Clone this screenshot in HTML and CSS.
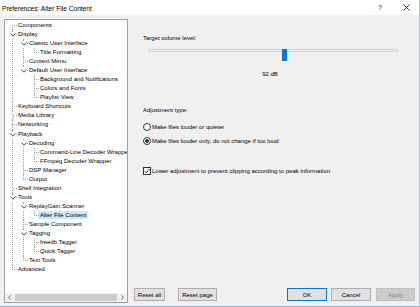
FILE: index.html
```html
<!DOCTYPE html>
<html lang="en">
<head>
  <meta charset="UTF-8">
  <title>Preferences: Alter File Content</title>
  <link rel="stylesheet" href="styles.css">
</head>
<body>
  <div class="window">
    <div class="titlebar">
      <span class="title">Preferences: Alter File Content</span>
      <span class="tb-btn help">?</span>
      <span class="tb-btn close">
        <svg width="7" height="7" viewBox="0 0 7 7"><path d="M0.5 0.5L6.5 6.5M6.5 0.5L0.5 6.5" stroke="#222" stroke-width="0.9"/></svg>
      </span>
    </div>

    <div class="main">
      <div class="tree-pane">
        <ul class="tree">
          <li><div class="row">Components</div></li>
          <li>
            <span class="twisty open"><svg width="6" height="4" viewBox="0 0 6 4"><polyline points="0.5,0.5 3,3.2 5.5,0.5" fill="none" stroke="#4a4a4a" stroke-width="1"/></svg></span>
            <div class="row">Display</div>
            <ul>
              <li>
                <span class="twisty open"><svg width="6" height="4" viewBox="0 0 6 4"><polyline points="0.5,0.5 3,3.2 5.5,0.5" fill="none" stroke="#4a4a4a" stroke-width="1"/></svg></span>
                <div class="row">Classic User Interface</div>
                <ul>
                  <li><div class="row">Title Formatting</div></li>
                </ul>
              </li>
              <li><div class="row">Context Menu</div></li>
              <li>
                <span class="twisty open"><svg width="6" height="4" viewBox="0 0 6 4"><polyline points="0.5,0.5 3,3.2 5.5,0.5" fill="none" stroke="#4a4a4a" stroke-width="1"/></svg></span>
                <div class="row">Default User Interface</div>
                <ul>
                  <li><div class="row">Background and Notifications</div></li>
                  <li><div class="row">Colors and Fonts</div></li>
                  <li><div class="row">Playlist View</div></li>
                </ul>
              </li>
            </ul>
          </li>
          <li><div class="row">Keyboard Shortcuts</div></li>
          <li>
            <span class="twisty shut"><svg width="4" height="6" viewBox="0 0 4 6"><polyline points="0.6,0.5 3.2,3 0.6,5.5" fill="none" stroke="#a6a6a6" stroke-width="1"/></svg></span>
            <div class="row">Media Library</div>
          </li>
          <li><div class="row">Networking</div></li>
          <li>
            <span class="twisty open"><svg width="6" height="4" viewBox="0 0 6 4"><polyline points="0.5,0.5 3,3.2 5.5,0.5" fill="none" stroke="#4a4a4a" stroke-width="1"/></svg></span>
            <div class="row">Playback</div>
            <ul>
              <li>
                <span class="twisty open"><svg width="6" height="4" viewBox="0 0 6 4"><polyline points="0.5,0.5 3,3.2 5.5,0.5" fill="none" stroke="#4a4a4a" stroke-width="1"/></svg></span>
                <div class="row">Decoding</div>
                <ul>
                  <li><div class="row">Command-Line Decoder Wrapper</div></li>
                  <li><div class="row">FFmpeg Decoder Wrapper</div></li>
                </ul>
              </li>
              <li><div class="row">DSP Manager</div></li>
              <li><div class="row">Output</div></li>
            </ul>
          </li>
          <li>
            <span class="twisty shut"><svg width="4" height="6" viewBox="0 0 4 6"><polyline points="0.6,0.5 3.2,3 0.6,5.5" fill="none" stroke="#a6a6a6" stroke-width="1"/></svg></span>
            <div class="row">Shell Integration</div>
          </li>
          <li>
            <span class="twisty open"><svg width="6" height="4" viewBox="0 0 6 4"><polyline points="0.5,0.5 3,3.2 5.5,0.5" fill="none" stroke="#4a4a4a" stroke-width="1"/></svg></span>
            <div class="row">Tools</div>
            <ul>
              <li>
                <span class="twisty open"><svg width="6" height="4" viewBox="0 0 6 4"><polyline points="0.5,0.5 3,3.2 5.5,0.5" fill="none" stroke="#4a4a4a" stroke-width="1"/></svg></span>
                <div class="row">ReplayGain Scanner</div>
                <ul>
                  <li><div class="row"><span class="sel">Alter File Content</span></div></li>
                </ul>
              </li>
              <li><div class="row">Sample Component</div></li>
              <li>
                <span class="twisty open"><svg width="6" height="4" viewBox="0 0 6 4"><polyline points="0.5,0.5 3,3.2 5.5,0.5" fill="none" stroke="#4a4a4a" stroke-width="1"/></svg></span>
                <div class="row">Tagging</div>
                <ul>
                  <li><div class="row">freedb Tagger</div></li>
                  <li><div class="row">Quick Tagger</div></li>
                </ul>
              </li>
              <li><div class="row">Text Tools</div></li>
            </ul>
          </li>
          <li><div class="row">Advanced</div></li>
        </ul>

        <div class="hscroll">
          <span class="scroll-arrow"><svg width="3" height="5" viewBox="0 0 3 5"><polyline points="2.6,0.4 0.6,2.5 2.6,4.6" fill="none" stroke="#606060" stroke-width="0.9"/></svg></span>
          <div class="scroll-track"><div class="scroll-thumb"></div></div>
          <span class="scroll-arrow"><svg width="3" height="5" viewBox="0 0 3 5"><polyline points="0.4,0.4 2.4,2.5 0.4,4.6" fill="none" stroke="#606060" stroke-width="0.9"/></svg></span>
        </div>
      </div>

      <div class="page">
        <div class="content">
          <div class="label">Target volume level:</div>
          <div class="slider">
            <div class="slider-track"></div>
            <div class="slider-thumb" style="left: 134px;"></div>
          </div>
          <div class="slider-value">92 dB</div>

          <div class="label group">Adjustment type:</div>
          <div class="option first">
            <span class="radio"></span>
            <span>Make files louder or quieter</span>
          </div>
          <div class="option">
            <span class="radio checked"></span>
            <span>Make files louder only, do not change if too loud</span>
          </div>
          <div class="option check-row">
            <span class="checkbox">
              <svg width="6" height="6" viewBox="0 0 6 6"><polyline points="0.6,3 2.3,4.8 5.4,1" fill="none" stroke="#222" stroke-width="0.9"/></svg>
            </span>
            <span>Lower adjustment to prevent clipping according to peak information</span>
          </div>
        </div>

        <div class="buttons">
          <button class="btn reset-all">Reset all</button>
          <button class="btn reset-page">Reset page</button>
          <span class="spacer"></span>
          <button class="btn default">OK</button>
          <button class="btn">Cancel</button>
          <button class="btn disabled">Apply</button>
        </div>
      </div>
    </div>
  </div>
</body>
</html>
```

FILE: styles.css
```css
* {
  box-sizing: border-box;
}
body {
  margin: 0;
  font-family: "Liberation Sans", Arial, sans-serif;
  font-size: 6px;
  color: #000;
  background: #f0f0f0;
}
.window {
  width: 420px;
  height: 307px;
  display: flex;
  flex-direction: column;
  background: #f0f0f0;
  border-right: 1px solid #a9c3e2;
  border-bottom: 1px solid #8fb3dc;
}
.titlebar {
  height: 15px;
  flex: none;
  display: flex;
  align-items: center;
  background: #fff;
  padding-left: 2px;
}
.title {
  flex: 1;
  font-size: 6.6px;
  padding-top: 1px;
}
.tb-btn {
  width: 26px;
  display: flex;
  justify-content: center;
  align-items: center;
}
.help {
  font-size: 7px;
  color: #222;
}
.main {
  flex: 1;
  display: flex;
  min-height: 0;
}

/* tree */
.tree-pane {
  width: 124px;
  height: 284px;
  margin: 4px 0 0 4px;
  background: #fff;
  border: 1px solid #a0a0a0;
  display: flex;
  flex-direction: column;
  overflow: hidden;
}
.tree, .tree ul {
  list-style: none;
  margin: 0;
  padding: 0;
}
.tree {
  flex: 1;
  padding: 0.8px 0 0 7px;
  overflow: hidden;
  white-space: nowrap;
}
.tree ul {
  margin-left: 5px;
}
.tree li {
  position: relative;
  padding-left: 6px;
}
.tree li::before {
  content: '';
  position: absolute;
  left: 0;
  top: 0;
  bottom: 0;
  border-left: 1px dotted #a0a0a0;
}
.tree li:last-child::before {
  bottom: auto;
  height: 5px;
}
.tree > li:first-child::before {
  top: 4px;
}
.tree li::after {
  content: '';
  position: absolute;
  left: 0;
  top: 4px;
  width: 5px;
  border-top: 1px dotted #a0a0a0;
}
.row {
  height: 9.07px;
  line-height: 9px;
}
.twisty {
  position: absolute;
  left: -2px;
  top: 2px;
  width: 6px;
  height: 6px;
  background: #fff;
  z-index: 1;
  display: flex;
  align-items: center;
  justify-content: center;
}
.sel {
  display: inline-block;
  background: #cce8ff;
  line-height: 8px;
  padding: 0 2px;
  margin-left: -2px;
}
.hscroll {
  height: 9px;
  flex: none;
  display: flex;
  align-items: center;
  background: #f0f0f0;
}
.scroll-arrow {
  width: 9px;
  height: 9px;
  display: flex;
  align-items: center;
  justify-content: center;
}
.scroll-track {
  flex: 1;
  height: 7px;
  padding: 0 1px;
}
.scroll-thumb {
  height: 7px;
  background: #cdcdcd;
}

/* page */
.page {
  flex: 1;
  display: flex;
  flex-direction: column;
}
.content {
  flex: 1;
  padding: 20px 0 0 15px;
}
.label {
  line-height: 7px;
}
.label.group {
  margin-top: 29px;
}
.slider {
  position: relative;
  width: 250px;
  height: 12px;
  margin: 7px 0 0 5px;
}
.slider-track {
  height: 3px;
  margin-top: 5px;
  background: #e7eaea;
  border: 1px solid #d6d6d6;
}
.slider-thumb {
  position: absolute;
  top: 0;
  width: 5px;
  height: 12px;
  background: #0078d7;
}
.slider-value {
  width: 250px;
  margin: 10px 0 0 5px;
  padding-right: 6px;
  text-align: center;
  line-height: 7px;
}
.option {
  display: flex;
  align-items: center;
  gap: 1px;
  height: 9px;
  margin-top: 5px;
}
.option.first {
  margin-top: 8px;
}
.option.check-row {
  margin-top: 21px;
}
.radio {
  width: 8px;
  height: 8px;
  border: 1px solid #333;
  border-radius: 50%;
  background: #fff;
  display: flex;
  align-items: center;
  justify-content: center;
}
.radio.checked::after {
  content: '';
  width: 4px;
  height: 4px;
  border-radius: 50%;
  background: #333;
}
.checkbox {
  width: 8px;
  height: 8px;
  border: 1px solid #333;
  background: #fff;
  display: flex;
  align-items: center;
  justify-content: center;
}
.buttons {
  display: flex;
  gap: 4px;
  padding: 0 4px 5px 6px;
}
.spacer {
  flex: 1;
}
.btn {
  height: 13px;
  width: 40px;
  padding: 0;
  font-family: "Liberation Sans", Arial, sans-serif;
  font-size: 6px;
  color: #000;
  background: #e1e1e1;
  border: 1px solid #adadad;
}
.btn.reset-all {
  width: 31px;
  margin-right: 9px;
}
.btn.reset-page {
  width: 39px;
}
.btn.default {
  border-color: #0078d7;
}
.btn.disabled {
  width: 39px;
  margin-left: 1px;
  color: #838383;
  background: #cccccc;
  border-color: #bfbfbf;
}
```
